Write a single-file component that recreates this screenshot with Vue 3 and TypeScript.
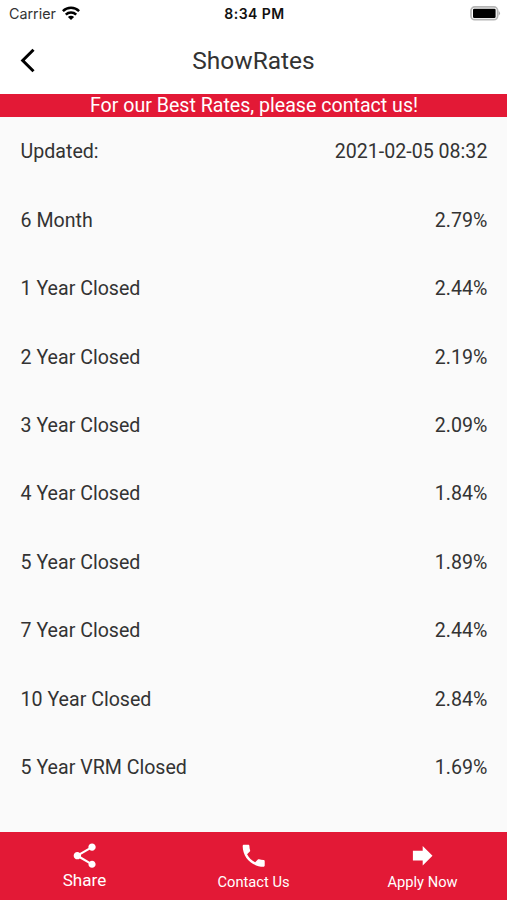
<script setup lang="ts">
interface Rate {
  label: string
  value: string
}

const rates: Rate[] = [
  { label: 'Updated:', value: '2021-02-05 08:32' },
  { label: '6 Month', value: '2.79%' },
  { label: '1 Year Closed', value: '2.44%' },
  { label: '2 Year Closed', value: '2.19%' },
  { label: '3 Year Closed', value: '2.09%' },
  { label: '4 Year Closed', value: '1.84%' },
  { label: '5 Year Closed', value: '1.89%' },
  { label: '7 Year Closed', value: '2.44%' },
  { label: '10 Year Closed', value: '2.84%' },
  { label: '5 Year VRM Closed', value: '1.69%' },
]
</script>

<template>
  <div class="screen">
    <div class="status">
      <div class="carrier">
        <span>Carrier</span>
        <svg class="wifi" viewBox="0 0 18 14" width="18" height="14">
          <g fill="none" stroke="#000" stroke-width="2.5">
            <path d="M0.9 5.1A11.6 11.6 0 0 1 17.1 5.1" />
            <path d="M3.8 8.6A7.4 7.4 0 0 1 14.2 8.6" />
          </g>
          <path d="M9 14L5.9 11.1A4.4 4.4 0 0 1 12.1 11.1Z" />
        </svg>
      </div>
      <span class="time">8:34 PM</span>
      <svg class="battery" viewBox="0 0 31 15" width="31" height="15">
        <rect x="1" y="0.9" width="26.6" height="12.8" rx="3.7" fill="#fff" stroke="#b5b5b5" stroke-width="1.7" />
        <rect x="3" y="2.7" width="22.6" height="9.2" rx="1.2" />
        <path d="M28.6 4.8Q31.4 7.3 28.6 9.8Z" fill="#aaa" />
      </svg>
    </div>
    <header class="header">
      <svg class="back" viewBox="0 0 16 26" width="16" height="26">
        <path d="M13.5 1.7L2.7 12.5L13.5 23.3" fill="none" stroke="#000" stroke-width="3" />
      </svg>
      <h1>ShowRates</h1>
      <span></span>
    </header>
    <div class="banner">For our Best Rates, please contact us!</div>
    <main class="rates">
      <div v-for="rate in rates" :key="rate.label" class="row">
        <span>{{ rate.label }}</span>
        <span>{{ rate.value }}</span>
      </div>
    </main>
    <nav class="tabs">
      <div class="tab active">
        <svg viewBox="0 0 24 24" width="29.4" height="29.4">
          <path d="M18 16.08c-.76 0-1.44.3-1.96.77L8.91 12.7c.05-.23.09-.46.09-.7s-.04-.47-.09-.7l7.05-4.11c.54.5 1.25.81 2.04.81 1.66 0 3-1.34 3-3s-1.34-3-3-3-3 1.34-3 3c0 .24.04.47.09.7L8.04 9.81C7.5 9.31 6.79 9 6 9c-1.66 0-3 1.34-3 3s1.34 3 3 3c.79 0 1.5-.31 2.04-.81l7.12 4.16c-.05.21-.08.43-.08.65 0 1.61 1.31 2.92 2.92 2.92s2.92-1.31 2.92-2.92-1.31-2.92-2.92-2.92z" />
        </svg>
        <span>Share</span>
      </div>
      <div class="tab">
        <svg viewBox="0 0 24 24" width="29.4" height="29.4">
          <path d="M20 15.5c-1.25 0-2.45-.2-3.57-.57-.35-.11-.74-.03-1.02.24l-2.2 2.2c-2.83-1.44-5.15-3.75-6.59-6.59l2.2-2.21c.28-.26.36-.65.25-1C8.7 6.45 8.5 5.25 8.5 4c0-.55-.45-1-1-1H4c-.55 0-1 .45-1 1 0 9.39 7.61 17 17 17 .55 0 1-.45 1-1v-3.5c0-.55-.45-1-1-1z" />
        </svg>
        <span>Contact Us</span>
      </div>
      <div class="tab">
        <svg viewBox="0 0 24 24" width="29.4" height="29.4">
          <path d="M4 8h8V4l8 8-8 8v-4H4z" />
        </svg>
        <span>Apply Now</span>
      </div>
    </nav>
  </div>
</template>

<style>
body {
  margin: 0;
}
</style>

<style scoped>
.screen {
  display: flex;
  flex-direction: column;
  width: 507px;
  height: 900px;
  overflow: hidden;
  background: #fafafa;
  color: #333;
  font-family: Roboto, sans-serif;
}

.status {
  display: grid;
  grid-template-columns: 1fr auto 1fr;
  align-items: center;
  flex: none;
  height: 27px;
  padding: 0 7px 0 9px;
  background: #fff;
  font-family: Inter, sans-serif;
  font-size: 14.3px;
}

.carrier {
  display: flex;
  align-items: center;
  gap: 6px;
}

.wifi {
  margin-bottom: 2px;
}

.time {
  color: #111;
  font-weight: 600;
  font-size: 14px;
  letter-spacing: 0.45px;
}

.battery {
  justify-self: end;
  margin-right: -1px;
}

.header {
  display: grid;
  grid-template-columns: 1fr auto 1fr;
  align-items: center;
  flex: none;
  height: 67px;
  padding: 0 20px;
  background: #fff;
}

h1 {
  margin: 0;
  font-size: 24.5px;
  font-weight: 400;
  line-height: 30px;
}

.banner {
  flex: none;
  height: 23px;
  padding-left: 1px;
  background: #e31936;
  color: #fff;
  font-size: 19.6px;
  line-height: 23px;
  text-align: center;
}

.rates {
  flex: 1;
  padding-top: 0.8px;
}

.row {
  display: flex;
  align-items: center;
  justify-content: space-between;
  height: 68.4px;
  padding: 0 19.6px 0 20.6px;
  font-size: 19.6px;
}

.tabs {
  display: grid;
  grid-template-columns: repeat(3, 1fr);
  flex: none;
  height: 68.5px;
  background: #e31936;
  color: #fff;
}

.tab {
  display: flex;
  flex-direction: column;
  align-items: center;
  padding-top: 9.5px;
  font-size: 14.7px;
  line-height: 24px;
}

.tab svg {
  fill: currentColor;
}

.active {
  font-size: 17.1px;
  line-height: 21px;
}
</style>
